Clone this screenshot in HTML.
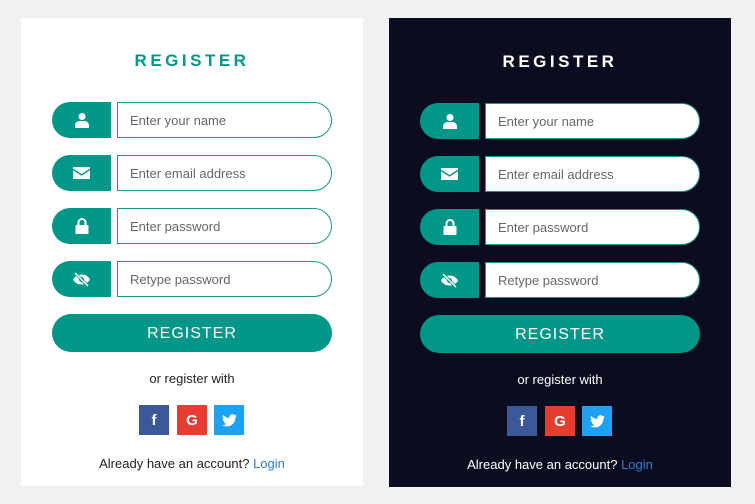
<!DOCTYPE html>
<html><head><style>
*{margin:0;padding:0;box-sizing:border-box}
body{width:755px;height:504px;background:#f1f1f1;font-family:"Liberation Sans",sans-serif;position:relative;overflow:hidden}
.card{position:absolute;top:18px;width:342px;height:468px;background:#fff}
.dark{background:#0b0c1f;top:18px;height:469px}
.title{position:absolute;top:33px;left:0;width:100%;text-align:center;font-weight:bold;font-size:17px;letter-spacing:3.5px;color:#009688}
.dark .title{color:#fff}
.ic{position:absolute;left:31px;width:59px;height:36px;background:#009688;border-radius:18px 0 0 18px;display:flex;align-items:center;justify-content:center}
.in{position:absolute;left:96px;width:215px;height:36px;border:1.5px solid #1a9688;border-radius:0 18px 18px 0;background:#fff;font-size:13px;color:#666;padding-left:12px;line-height:35px}
.btn{position:absolute;left:31px;top:296px;width:280px;height:38px;background:#009688;border-radius:19px;color:#fff;text-align:center;line-height:39px;font-size:16px;letter-spacing:1px}
.or{position:absolute;top:353px;width:100%;text-align:center;font-size:13px;color:#222}
.dark .or,.dark .al{color:#fff}
.so{position:absolute;top:387px;width:30px;height:30px;color:#fff;font-weight:bold;font-size:15px;display:flex;align-items:center;justify-content:center}
.al{position:absolute;top:438px;width:100%;text-align:center;font-size:13px;color:#222}
.al span{color:#2a7fd4}
</style></head><body>
<div class="card" style="left:21px">
<div class="title">REGISTER</div>
<div class="ic" style="top:84px"><svg width="16" height="16" viewBox="0 0 16 16" fill="#fff"><circle cx="8" cy="4.5" r="3.5"/><path d="M1 16v-2.5C1 10.5 3.5 9 6 9h4c2.5 0 5 1.5 5 4.5V16z"/></svg></div>
<div class="in" style="top:84px">Enter your name</div>
<div class="ic" style="top:137px"><svg width="17" height="12" viewBox="0 0 17 12" fill="#fff"><path d="M0 0h17v1.5L8.5 7 0 1.5z"/><path d="M0 3.2l8.5 5.5L17 3.2V12H0z"/></svg></div>
<div class="in" style="top:137px">Enter email address</div>
<div class="ic" style="top:190px"><svg width="14" height="16" viewBox="0 0 14 16"><path d="M3.5 7V4.5a3.5 3.5 0 0 1 7 0V7" stroke="#fff" stroke-width="2" fill="none"/><rect x="0.5" y="7" width="13" height="9" rx="1" fill="#fff"/></svg></div>
<div class="in" style="top:190px">Enter password</div>
<div class="ic" style="top:243px"><svg width="19" height="15" viewBox="0 0 19 15"><path d="M1 7.5C3 4 6 2.5 9.5 2.5S16 4 18 7.5C16 11 13 12.5 9.5 12.5S3 11 1 7.5z" fill="#fff"/><circle cx="9.5" cy="7.5" r="2.5" fill="#009688"/><path d="M3 1l13 13" stroke="#009688" stroke-width="3"/><path d="M3 1l13 13" stroke="#fff" stroke-width="1.5"/></svg></div>
<div class="in" style="top:243px">Retype password</div>
<div class="btn">REGISTER</div>
<div class="or">or register with</div>
<div class="so" style="left:118px;background:#3b5998">f</div>
<div class="so" style="left:156px;background:#e53d2f">G</div>
<div class="so" style="left:193px;background:#1da1f2"><svg width="15" height="13" viewBox="0 0 24 20" fill="#fff"><path d="M24 2.4a10 10 0 0 1-2.8.8A5 5 0 0 0 23.3.4a10 10 0 0 1-3.1 1.2A4.9 4.9 0 0 0 11.8 6 14 14 0 0 1 1.7.9a4.9 4.9 0 0 0 1.5 6.6A4.9 4.9 0 0 1 1 6.900a4.900 4.900 0 0 0 3.900 4.800 5 5 0 0 1-2.200.1 4.900 4.900 0 0 0 4.600 3.400A9.900 9.900 0 0 1 0 17.300 14 14 0 0 0 7.500 19.500c9 0 14-7.500 14-14v-.6A10 10 0 0 0 24 2.400z"/></svg></div>
<div class="al">Already have an account? <span>Login</span></div>
</div>
<div class="card dark" style="left:389px">
<div class="title" style="top:34px">REGISTER</div>
<div class="ic" style="top:85px"><svg width="16" height="16" viewBox="0 0 16 16" fill="#fff"><circle cx="8" cy="4.5" r="3.5"/><path d="M1 16v-2.5C1 10.5 3.5 9 6 9h4c2.5 0 5 1.5 5 4.5V16z"/></svg></div>
<div class="in" style="top:85px">Enter your name</div>
<div class="ic" style="top:138px"><svg width="17" height="12" viewBox="0 0 17 12" fill="#fff"><path d="M0 0h17v1.5L8.5 7 0 1.5z"/><path d="M0 3.2l8.5 5.5L17 3.2V12H0z"/></svg></div>
<div class="in" style="top:138px">Enter email address</div>
<div class="ic" style="top:191px"><svg width="14" height="16" viewBox="0 0 14 16"><path d="M3.5 7V4.5a3.5 3.5 0 0 1 7 0V7" stroke="#fff" stroke-width="2" fill="none"/><rect x="0.5" y="7" width="13" height="9" rx="1" fill="#fff"/></svg></div>
<div class="in" style="top:191px">Enter password</div>
<div class="ic" style="top:244px"><svg width="19" height="15" viewBox="0 0 19 15"><path d="M1 7.5C3 4 6 2.5 9.5 2.5S16 4 18 7.5C16 11 13 12.5 9.5 12.5S3 11 1 7.5z" fill="#fff"/><circle cx="9.5" cy="7.5" r="2.5" fill="#009688"/><path d="M3 1l13 13" stroke="#009688" stroke-width="3"/><path d="M3 1l13 13" stroke="#fff" stroke-width="1.5"/></svg></div>
<div class="in" style="top:244px">Retype password</div>
<div class="btn" style="top:297px">REGISTER</div>
<div class="or" style="top:354px">or register with</div>
<div class="so" style="left:118px;top:388px;background:#3b5998">f</div>
<div class="so" style="left:156px;top:388px;background:#e53d2f">G</div>
<div class="so" style="left:193px;top:388px;background:#1da1f2"><svg width="15" height="13" viewBox="0 0 24 20" fill="#fff"><path d="M24 2.4a10 10 0 0 1-2.8.8A5 5 0 0 0 23.3.4a10 10 0 0 1-3.1 1.2A4.9 4.9 0 0 0 11.8 6 14 14 0 0 1 1.7.9a4.9 4.9 0 0 0 1.5 6.6A4.9 4.9 0 0 1 1 6.9a4.9 4.9 0 0 0 3.9 4.8 5 5 0 0 1-2.2.1 4.9 4.9 0 0 0 4.6 3.4A9.9 9.9 0 0 1 0 17.3 14 14 0 0 0 7.5 19.5c9 0 14-7.5 14-14v-.6A10 10 0 0 0 24 2.4z"/></svg></div>
<div class="al" style="top:439px">Already have an account? <span>Login</span></div>
</div>
</body></html>
